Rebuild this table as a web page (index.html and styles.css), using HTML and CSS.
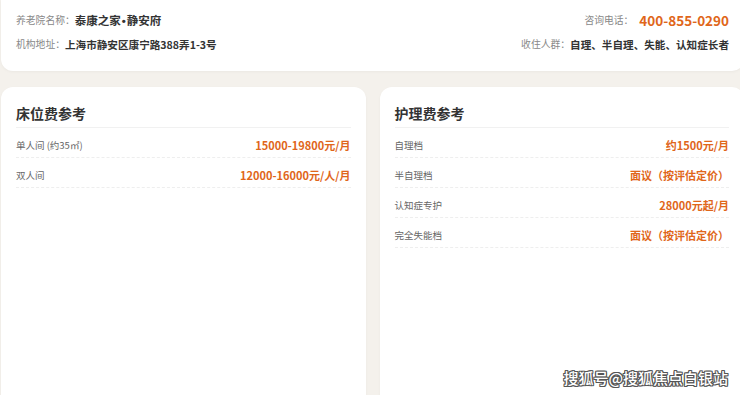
FILE: index.html
```html
<!DOCTYPE html>
<html lang="zh-CN">
<head>
<meta charset="utf-8">
<title>泰康之家•静安府</title>
<link rel="stylesheet" href="styles.css">
</head>
<body>
<div class="page">
  <section class="info">
    <div class="info-col">
      <div class="info-row"><span class="lbl">养老院名称：</span><span class="val name">泰康之家<span class="dot">•</span>静安府</span></div>
      <div class="info-row"><span class="lbl">机构地址：</span><span class="val addr">上海市静安区康宁路388弄1-3号</span></div>
    </div>
    <div class="info-col right">
      <div class="info-row"><span class="lbl">咨询电话：</span><span class="phone">400-855-0290</span></div>
      <div class="info-row"><span class="lbl">收住人群：</span><span class="val addr">自理、半自理、失能、认知症长者</span></div>
    </div>
  </section>
  <div class="cards">
    <section class="card">
      <h2 class="card-title">床位费参考</h2>
      <div class="row"><span class="row-lbl">单人间 (约35㎡)</span><span class="row-val">15000-19800元/月</span></div>
      <div class="row"><span class="row-lbl">双人间</span><span class="row-val">12000-16000元/人/月</span></div>
    </section>
    <section class="card">
      <h2 class="card-title">护理费参考</h2>
      <div class="row"><span class="row-lbl">自理档</span><span class="row-val">约1500元/月</span></div>
      <div class="row"><span class="row-lbl">半自理档</span><span class="row-val">面议（按评估定价）</span></div>
      <div class="row"><span class="row-lbl">认知症专护</span><span class="row-val">28000元起/月</span></div>
      <div class="row"><span class="row-lbl">完全失能档</span><span class="row-val">面议（按评估定价）</span></div>
    </section>
  </div>
  <div class="watermark">搜狐号@搜狐焦点白银站</div>
</div>
</body>
</html>
```
FILE: styles.css
```css
html, body {
  margin: 0;
  padding: 0;
}
body {
  background: #f4f1ec;
  font-family: "Noto Sans CJK SC", "Noto Sans", sans-serif;
  overflow: hidden;
  width: 740px;
  height: 395px;
}
.page {
  width: 743px;
  margin-left: 1px;
  position: relative;
  height: 395px;
}
.info {
  background: #fff;
  border-radius: 0 0 12px 12px;
  padding: 10px 15px 17px;
  display: flex;
  justify-content: space-between;
  box-shadow: 0 1px 3px rgba(0,0,0,0.04);
}
.info-col {
  display: flex;
  flex-direction: column;
  gap: 4px;
}
.info-col.right {
  align-items: flex-end;
}
.info-row {
  height: 20px;
  display: flex;
  align-items: center;
}
.lbl {
  font-size: 9.8px;
  color: #888;
}
.val {
  color: #333;
  font-weight: 700;
}
.name {
  font-size: 11.5px;
}
.dot {
  font-family: "Liberation Sans", sans-serif;
  margin: 0 1px;
}
.addr {
  font-size: 10.6px;
}
.phone {
  color: #e0661a;
  font-weight: 700;
  font-size: 13.5px;
  margin-left: 6px;
}
.cards {
  margin-top: 16px;
  display: grid;
  grid-template-columns: 1fr 1fr;
  gap: 14px;
}
.card {
  background: #fff;
  border-radius: 12px;
  padding: 16px 15px 0;
  min-height: 400px;
  box-shadow: 0 1px 3px rgba(0,0,0,0.04);
}
.card-title {
  margin: 0;
  font-size: 14px;
  line-height: 20px;
  font-weight: 700;
  color: #333;
  padding-bottom: 4px;
  border-bottom: 1px solid #f1f1f1;
}
.row {
  display: flex;
  justify-content: space-between;
  align-items: center;
  padding: 11px 0 6px;
  line-height: 12px;
  border-bottom: 1px dashed #eee;
}
.row-lbl {
  font-size: 9.5px;
  color: #666;
}
.row-val {
  font-size: 11px;
  font-weight: 700;
  color: #e0661a;
}
.watermark {
  position: absolute;
  right: 16px;
  top: 367px;
  font-size: 15px;
  line-height: 22px;
  color: #fff;
  font-weight: 500;
  text-shadow: -1px 0 #555, 1px 0 #555, 0 -1px #555, 0 1px #555, 1px 1px #555, -1px -1px #555, 1px -1px #555, -1px 1px #555;
}
```
